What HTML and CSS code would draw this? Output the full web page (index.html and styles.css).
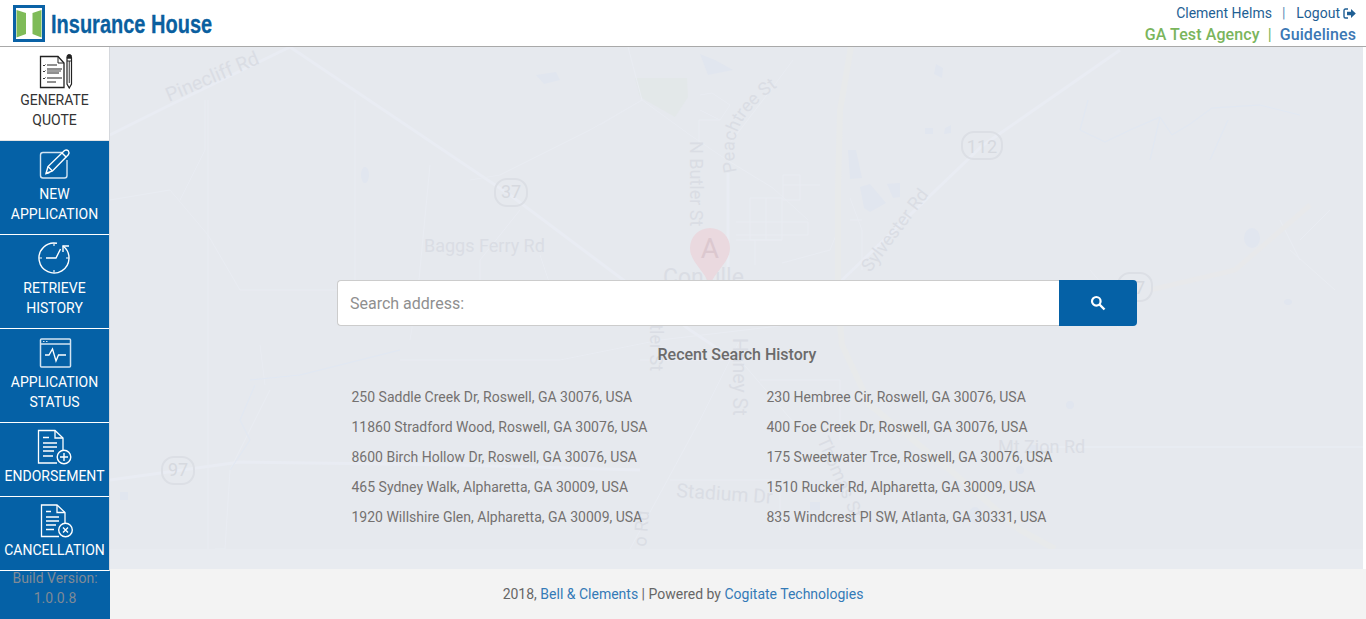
FILE: index.html
```html
<!DOCTYPE html>
<html lang="en">
<head>
<meta charset="utf-8">
<title>Insurance House</title>
<link rel="stylesheet" href="styles.css">
</head>
<body>
<div class="app">
  <header class="topbar">
    <a class="brand" href="#">
      <svg class="brand-mark" width="32" height="37" viewBox="0 0 32 37">
        <rect x="0" y="0" width="32" height="37" fill="#0a62a6"/>
        <rect x="3" y="3" width="26" height="31" fill="#fff"/>
        <path d="M3.500 5 L13 8 V29 L3.500 32.500 Z" fill="#7fbb58"/>
        <path d="M28.500 5 L19.500 8 V29 L28.500 32.500 Z" fill="#7fbb58"/>
      </svg>
      <span class="brand-name">Insurance House</span>
    </a>
    <div class="account">
      <div class="account-user">
        <a href="#">Clement Helms</a><span class="sep">|</span><a href="#">Logout</a>
        <svg class="logout-icon" width="13" height="11" viewBox="0 0 13 11">
          <path d="M5 1 H2.500 Q1 1 1 2.500 V8.500 Q1 10 2.500 10 H5" fill="none" stroke="#1f5f94" stroke-width="1.400"/>
          <path d="M4 3.700 H8 V1 L12.800 5.500 L8 10 V7.300 H4 Z" fill="#1f5f94"/>
        </svg>
      </div>
      <div class="account-agency">
        <a class="agency" href="#">GA Test Agency</a><span class="sep-strong">|</span><a class="guidelines" href="#">Guidelines</a>
      </div>
    </div>
  </header>

  <div class="body-row">
    <nav class="sidebar">
      <a class="nav-item is-active" href="#">
        <svg class="nav-icon" width="36" height="36" viewBox="0 0 36 36" fill="none" stroke="#222" stroke-width="1">
          <path d="M3.500 3.500 H21 L27 10 V34.500 H3.500 Z" stroke-width="1.300"/>
          <path d="M21 3.500 V10 H27" stroke-width="1"/>
          <path d="M10 12 H20 M10 16 H25 M10 20 H22 M10 25 H25 M10 29 H19" stroke-width="1.200"/>
          <path d="M10 18 H24" stroke="#777" stroke-width="1.400"/>
          <path d="M6 12 l1 1 l1.500 -1.500 M6 18 l1 1 l1.500 -1.500 M6 25 l1 1 l1.500 -1.500" stroke-width=".9"/>
          <path d="M30 5 H34.500 V31 L32.250 35 L30 31 Z" stroke-width="1.200"/>
          <path d="M30 3.500 Q30 1.500 32.250 1.500 Q34.500 1.500 34.500 3.500 V5 H30 Z" fill="#222"/>
          <path d="M30 8 H34.500 M32.250 8 V30" stroke-width=".9"/>
        </svg>
        <span>GENERATE QUOTE</span>
      </a>
      <a class="nav-item" href="#">
        <svg class="nav-icon" width="36" height="36" viewBox="0 0 36 36" fill="none" stroke="#fff" stroke-width="1.400">
          <path d="M25 5.500 H6 Q3.500 5.500 3.500 8 V28.500 Q3.500 31 6 31 H27.500 Q30 31 30 28.500 V13" stroke="#d3e4f2"/>
          <path d="M9 26.500 L11 19.500 L27.500 3.500 Q29.500 2.200 31.300 3.800 Q32.800 5.800 31.300 7.800 L15.500 24 Z"/>
          <path d="M11 19.500 L15.500 24 M25 6 L29.300 10.300 M9 26.500 L12.500 25.500"/>
        </svg>
        <span>NEW APPLICATION</span>
      </a>
      <a class="nav-item" href="#">
        <svg class="nav-icon" width="36" height="36" viewBox="0 0 36 36" fill="none" stroke="#fff" stroke-width="1.400">
          <path d="M26 5 A15 15 0 1 1 20 2.300"/>
          <path d="M32 5 H26 V11"/>
          <path d="M9 17 H19 L23.500 8"/>
          <path d="M17 2.500 V5 M17 29 V31.800 M2.200 17 H5 M29 17 H31.800" stroke-width="1.100"/>
        </svg>
        <span>RETRIEVE HISTORY</span>
      </a>
      <a class="nav-item" href="#">
        <svg class="nav-icon" width="36" height="36" viewBox="0 0 36 36" fill="none" stroke="#d3e4f2" stroke-width="1.500">
          <rect x="3.500" y="4" width="30" height="28" rx="1"/>
          <path d="M3.500 9 H33.500"/>
          <path d="M6 6.500 H7.500 M9 6.500 H10.500" stroke-width="1"/>
          <path d="M8 20 H12 L15.500 14 L19 26 L21.500 20 H29" stroke="#fff" stroke-width="1.300"/>
        </svg>
        <span>APPLICATION STATUS</span>
      </a>
      <a class="nav-item" href="#">
        <svg class="nav-icon" width="36" height="36" viewBox="0 0 36 36" fill="none" stroke="#fff" stroke-width="1.300">
          <path d="M20 34 H1.500 V1.500 H18 L26 9 V21"/>
          <path d="M18 1.500 V9 H26"/>
          <path d="M6 8.500 H12 M6 14 H20 M6 18 H20 M6 22 H17 M6 27 H16"/>
          <circle cx="27" cy="28" r="6.800" stroke-width="1.400"/>
          <path d="M23 28 H31 M27 24 V32" stroke-width="1.400"/>
        </svg>
        <span>ENDORSEMENT</span>
      </a>
      <a class="nav-item" href="#">
        <svg class="nav-icon" width="36" height="36" viewBox="0 0 36 36" fill="none" stroke="#fff" stroke-width="1.300">
          <path d="M22 33.500 H4.500 V2 H20 L28 9.500 V20"/>
          <path d="M20 2 V9.500 H28"/>
          <path d="M9 8.500 H14 M9 14 H22 M9 18 H22 M9 22 H19 M9 26.500 H17"/>
          <circle cx="28.500" cy="27" r="6.800" stroke-width="1.400"/>
          <path d="M26 24.500 L31 29.500 M31 24.500 L26 29.500" stroke-width="1.400"/>
        </svg>
        <span>CANCELLATION</span>
      </a>
      <div class="build"><p class="build-text">Build Version:<br>1.0.0.8</p></div>
    </nav>

    <div class="content">
      <main class="map-area">
        <svg class="map" viewBox="110 47 1253 502" width="1253" height="502" aria-hidden="true">
          <defs>
            <path id="peachtree-path" d="M737 172 C727 130 745 108 790 78"/>
          </defs>
          <path d="M635 78 H687 L688 97 L675 117 L640 97 Z" fill="#e3e8e9"/>
          <g fill="none" stroke="#e9ecf3" stroke-width="3">
            <path d="M110 135 L170 105 L290 47"/>
            <path d="M290 47 L510 195 L690 330 L720 350"/>
            <path d="M110 480 L240 462 L460 465 L640 470"/>
            <path d="M840 282 L982 146 L1120 50"/>
            <path d="M780 302 L840 282"/>
            <path d="M728 173 V280"/>
            <path d="M1040 447 L1363 447" stroke-width="1.500"/>
          </g>
          <g fill="none" stroke="#e9ecf2" stroke-width="1">
            <path d="M205 100 V150 L180 200 M208 100 V549"/>
            <path d="M110 200 L170 190 L208 235 L240 290 H430 L510 290"/>
            <path d="M430 165 L418 290 L410 340 M355 100 V290"/>
            <path d="M628 47 L642 100 L690 135 L727 160 L773 188 L808 220 M600 125 L642 100"/>
            <path d="M470 180 L500 175 L590 130 L642 100"/>
            <path d="M793 60 L773 87 L730 143"/>
            <path d="M520 210 L480 260 V285 M540 255 L550 285"/>
            <path d="M700 95 L712 93 L730 105 L720 120 H699 V150 M700 110 L720 120"/>
            <path d="M740 340 L700 420 L630 549 M640 360 H740 L800 430"/>
            <path d="M400 360 H560 L660 340 L830 320"/>
            <path d="M270 390 L230 470 L225 549 L215 549 M260 345 L265 385"/>
            <path d="M670 480 H780 V530 M760 380 H840 V440"/>
            <path d="M750 198 H782 V240 H750 Z M736 222 H808 V235 H736 M736 240 H782 M766 198 V240 M783 175 H800 V200 H783 Z M783 185 H820 M755 240 V265"/>
            <path d="M782 263 L830 250 L838 230 M850 198 L862 230 V270 M850 220 H862"/>
            <path d="M1105 310 L1120 330 M1090 270 L1120 305"/>
            <path d="M1280 220 L1300 260 M1300 240 L1330 210 M1290 250 L1335 290"/>
          </g>
          <g fill="none" stroke="#e8eaeb" stroke-width="6">
            <path d="M851 47 L840 110 L838 190 V300 L842 345 L870 405 L950 470 L1020 530 L1055 549"/>
          </g>
          <path d="M1150 290 L1235 270 L1310 205" fill="none" stroke="#e8e9eb" stroke-width="5"/>
          <g fill="#e1e6ef">
            <path d="M848 150 L856 150 L862 178 L850 179 Z"/>
            <path d="M860 187 L870 184 L886 203 L870 212 L864 208 Z"/>
            <path d="M887 184 L900 183 L900 197 L893 198 Z"/>
            <path d="M536 75 L556 72 L560 80 L544 84 Z"/>
            <path d="M700 54 L715 60 L733 70 L708 75 Z"/>
            <path d="M936 64 L943 68 L942 78 L934 74 Z"/>
            <path d="M925 128 l8 0 l0 6 l-8 0 Z M945 128 l6 -3 l0 8 l-7 1 Z"/>
            <ellipse cx="1252" cy="238" rx="8" ry="10"/>
            <ellipse cx="1288" cy="302" rx="4" ry="3"/>
            <rect x="120" y="492" width="8" height="8"/>
            <ellipse cx="365" cy="175" rx="4" ry="8"/>
            <circle cx="1070" cy="405" r="4"/>
            <circle cx="1020" cy="470" r="4"/>
            <ellipse cx="975" cy="515" rx="6" ry="8"/>
            <rect x="810" y="502" width="10" height="8"/>
            <rect x="1030" y="445" width="8" height="8"/>
          </g>
          <path d="M1088 100 L1080 130 L1105 142 L1130 130 L1160 117 L1172 135 L1190 124 L1212 108 L1260 105 L1300 115" fill="none" stroke="#e1e8f3" stroke-width="1"/>
          <path d="M1228 120 L1210 160 M1160 117 L1150 160" fill="none" stroke="#e1e8f3" stroke-width="1"/>
          <path d="M255 385 L240 420 L250 440 L230 470 M250 380 L300 375 L400 350" fill="none" stroke="#e1e8f3" stroke-width="1"/>
          <g fill="none" stroke="#dcdfe5" stroke-width="2">
            <rect x="495" y="179" width="32" height="27" rx="12"/>
            <rect x="962" y="132" width="40" height="27" rx="12"/>
            <rect x="162" y="457" width="32" height="27" rx="12"/>
            <rect x="1118" y="273" width="34" height="28" rx="12"/>
          </g>
          <g class="map-shield" text-anchor="middle">
            <text x="511" y="198">37</text>
            <text x="982" y="153">112</text>
            <text x="178" y="476">97</text>
            <text x="1135" y="294">97</text>
          </g>
          <g class="map-label">
            <text class="map-label-mid" transform="translate(169 102) rotate(-23)">Pinecliff Rd</text>
            <text x="424" y="252">Baggs Ferry Rd</text>
            <text transform="translate(690 141) rotate(90)">N Butler St</text>
            <text><textPath href="#peachtree-path">Peachtree St</textPath></text>
            <text transform="translate(870 273) rotate(-53)">Sylvester Rd</text>
            <text x="663" y="285" class="map-label-big">Conville</text>
            <text transform="translate(650 303) rotate(90)">Butler St</text>
            <text class="map-label-mid" transform="translate(733 338) rotate(90)">Haney St</text>
            <text class="map-label-mid" transform="translate(676 497) rotate(4)">Stadium Dr</text>
            <text transform="translate(817 440) rotate(66)">Thomas St</text>
            <text x="998" y="453">Mt Zion Rd</text>
            <text transform="translate(646 547) rotate(-85)">o Rd</text>
          </g>
          <path d="M710 285 C704 270 690 262 690 248 A20 20 0 0 1 730 248 C730 262 716 270 710 285 Z" fill="#ead9df"/>
          <text x="710" y="258" class="map-pin-letter" text-anchor="middle">A</text>
        </svg>

        <div class="search-panel">
          <form class="search">
            <input class="search-input" type="text" placeholder="Search address:">
            <button class="search-button" type="button" aria-label="Search">
              <svg width="16" height="16" viewBox="0 0 16 16" fill="none" stroke="#fff">
                <circle cx="6.300" cy="6.300" r="4.300" stroke-width="2.200"/>
                <path d="M9.500 9.500 L14.500 14.500" stroke-width="2.400"/>
              </svg>
            </button>
          </form>
          <h2 class="history-title">Recent Search History</h2>
          <div class="history">
            <ul>
              <li>250 Saddle Creek Dr, Roswell, GA 30076, USA</li>
              <li>11860 Stradford Wood, Roswell, GA 30076, USA</li>
              <li>8600 Birch Hollow Dr, Roswell, GA 30076, USA</li>
              <li>465 Sydney Walk, Alpharetta, GA 30009, USA</li>
              <li>1920 Willshire Glen, Alpharetta, GA 30009, USA</li>
            </ul>
            <ul>
              <li>230 Hembree Cir, Roswell, GA 30076, USA</li>
              <li>400 Foe Creek Dr, Roswell, GA 30076, USA</li>
              <li>175 Sweetwater Trce, Roswell, GA 30076, USA</li>
              <li>1510 Rucker Rd, Alpharetta, GA 30009, USA</li>
              <li>835 Windcrest Pl SW, Atlanta, GA 30331, USA</li>
            </ul>
          </div>
        </div>
      </main>
      <footer class="footer"><p class="footer-text">2018, <a href="#">Bell &amp; Clements</a> | Powered by <a href="#">Cogitate Technologies</a></p></footer>
    </div>
  </div>
</div>
</body>
</html>
```
FILE: styles.css
```css
* { box-sizing: border-box; }
html, body { margin: 0; height: 100%; }
body {
  overflow: hidden;
  background: #fff;
  font-family: Roboto, "Liberation Sans", sans-serif;
  font-size: 14px;
  color: #666;
}
a { text-decoration: none; color: inherit; }

.app { display: flex; flex-direction: column; height: 619px; }

.topbar {
  flex: 0 0 47px;
  display: flex;
  justify-content: space-between;
  border-bottom: 1px solid #a9a9a9;
  padding: 0 10px 0 13px;
}
.brand { display: flex; align-items: center; gap: 6px; height: 46px; }
.brand-mark { display: block; margin-top: 0; }
.brand-name {
  font-family: "Liberation Sans", sans-serif;
  font-weight: 700;
  font-size: 25px;
  color: #0a5f9f;
  margin-top: 2px;
  transform: scaleX(0.8);
  transform-origin: left center;
  -webkit-text-stroke: 0.3px #0a5f9f;
}
.account { text-align: right; padding-top: 3px; }
.account-user { display: flex; justify-content: flex-end; align-items: center; height: 20px; color: #1f5f94; line-height: 20px; }
.sep { margin: 0 11px 0 10px; color: #5b8fb8; }
.logout-icon { margin-left: 3px; }
.account-agency { font-size: 16px; font-weight: 500; line-height: 22px; margin-top: 1px; letter-spacing: 0.1px; }
.agency { color: #7ab55c; }
.sep-strong { margin: 0 8px; color: #7ab55c; font-weight: 400; }
.guidelines { color: #3c78b4; }

.body-row { flex: 1; display: flex; min-height: 0; }

.sidebar {
  flex: 0 0 110px;
  display: flex;
  flex-direction: column;
  background: #0561a6;
  color: #fff;
  border-right: 1px solid #d5d8dd;
}
.nav-item {
  display: block;
  padding: 6px 0 10px;
  text-align: center;
  line-height: 20px;
  border-bottom: 1px solid #fff;
}
.nav-item span { display: block; padding: 0 10px; margin: 0 -10px; }
.nav-item.is-active { background: #fff; color: #333; border-bottom-color: #e4e4e4; }
.nav-icon { display: block; margin: 0 auto 1px; }
.build {
  display: flow-root;
  flex: 1;
  margin-right: -1px;
  background: #0561a6;
}
.build-text {
  margin: -3px 0 0;
  line-height: 20px;
  text-align: center;
  color: #7f8a96;
}

.content { flex: 1; display: flex; flex-direction: column; min-width: 0; }

.map-area {
  position: relative;
  flex: 1;
  margin-right: 3px;
  background: #e8ebf0;
  padding-top: 233px;
  overflow: hidden;
}
.map { position: absolute; left: 0; top: 0; background: #e6e9ee; }
.map text { font-family: Roboto, sans-serif; }
.map-label { fill: #dadde4; font-size: 18px; }
.map-label-mid { font-size: 19.500px; }
.map-label-big { font-size: 23px; }
.map-shield { fill: #d6d9df; font-size: 18px; }
.map-pin-letter { fill: #dcc8cf; font-size: 28px; }

.search-panel { position: relative; width: 800px; margin-left: 227px; }

.search { display: flex; height: 46px; }
.search-input {
  flex: 1;
  min-width: 0;
  padding: 0 12px;
  border: 1px solid #ccc;
  border-right: 0;
  border-radius: 4px 0 0 4px;
  background: #fff;
  font-family: Roboto, sans-serif;
  font-size: 16px;
  outline: none;
}
.search-input::placeholder { color: #8f8f8f; opacity: 1; }
.search-button {
  flex: 0 0 78px;
  display: flex;
  align-items: center;
  justify-content: center;
  padding: 0;
  border: 0;
  border-radius: 0 4px 4px 0;
  background: #0561a6;
}

.history-title {
  margin: 19px 0 17px;
  font-size: 16px;
  font-weight: 500;
  line-height: 20px;
  text-align: center;
  color: #6b6b6b;
}
.history { display: grid; grid-template-columns: 415px 1fr; padding-left: 14.500px; }
.history ul { list-style: none; margin: 0; padding: 0; }
.history li { line-height: 30px; color: #747170; white-space: nowrap; }

.footer {
  flex: 0 0 50px;
  display: flex;
  align-items: center;
  justify-content: center;
  padding-right: 110px;
  background: #f3f3f3;
  color: #666;
}
.footer-text { margin: 0; }
.footer a { color: #337ab7; }
```
